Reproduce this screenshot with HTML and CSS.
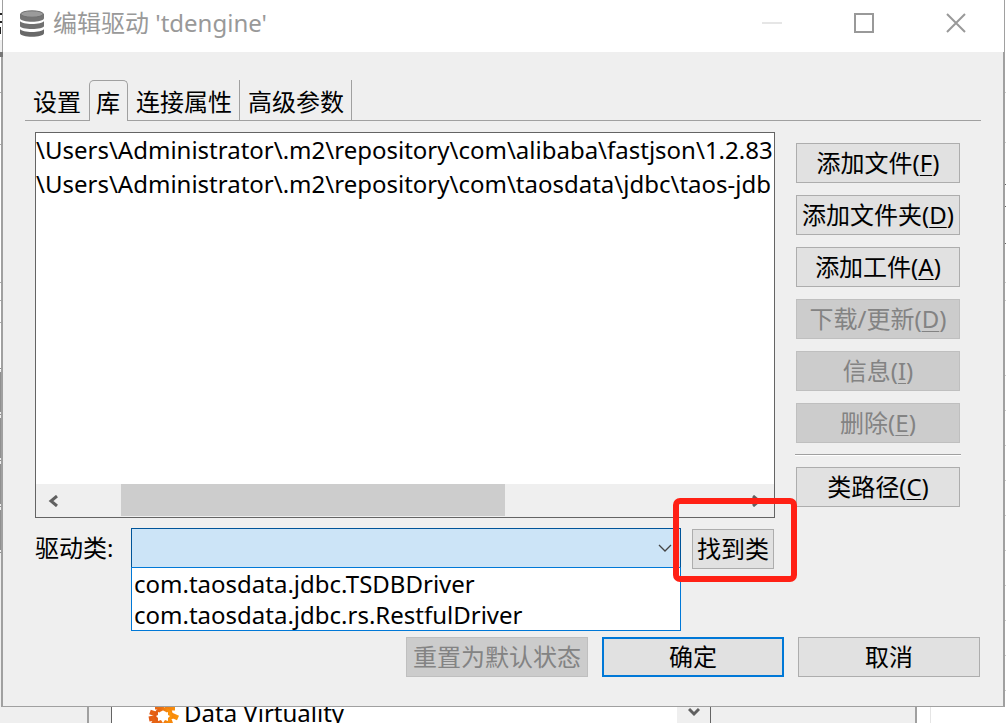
FILE: index.html
```html
<!DOCTYPE html>
<html lang="zh-CN">
<head>
<meta charset="utf-8">
<title>编辑驱动 'tdengine'</title>
<link rel="stylesheet" href="styles.css">
</head>
<body>
<div class="screen">
  <svg class="edge edge-left" width="3" height="707" viewBox="0 0 3 707" aria-hidden="true">
    <path fill="#efefef" d="M0 40h2v667H0z"/>
    <path fill="#fff" d="M0 57h1v313H0z"/>
    <path fill="#222" d="M0 13h2v2H0zM0 21h2v2H0zM0 27h1v7H0z"/>
    <path fill="#777" d="M0 52h3v5H0z"/>
    <path fill="#aaa" d="M0 92h3v1H0zM0 144h3v1H0zM0 282h3v1H0zM0 300h3v1H0zM0 322h3v1H0z"/>
    <path fill="#909090" d="M0 368h2v1H0zM0 372h2v40H0zM0 414h2v1H0zM0 418h2v40H0zM0 460h2v1H0zM0 464h2v40H0zM0 506h2v1H0zM0 510h2v40H0zM0 552h2v1H0z"/>
    <path fill="#a0a0a0" d="M2 0h1v52H2zM1 57h2v650H1z"/>
  </svg>

  <main class="dialog">
    <header class="titlebar">
      <svg class="db-icon" width="24" height="27" viewBox="0 0 24 27" aria-hidden="true">
        <path fill="#757575" d="M0 4v4c0 5 24 5 24 0V4z"/>
        <ellipse cx="12" cy="4" rx="11.300" ry="3.200" fill="#9b9b9b" stroke="#707070"/>
        <path fill="#707070" d="M0 11c2 4 22 4 24 0v5c0 4-24 4-24 0z"/>
        <path fill="#696969" d="M0 19c2 4 22 4 24 0v4c0 5-24 5-24 0z"/>
      </svg>
      <h1 class="title">编辑驱动 'tdengine'</h1>
      <div class="window-controls">
        <button class="win-btn" aria-label="最小化" disabled><svg width="20" height="20" viewBox="0 0 20 20"><path stroke="#e6e6e6" stroke-width="2" d="M0 10h20"/></svg></button>
        <button class="win-btn" aria-label="最大化"><svg width="20" height="20" viewBox="0 0 20 20"><path fill="none" stroke="#999" stroke-width="2" d="M1 1h18v18H1z"/></svg></button>
        <button class="win-btn" aria-label="关闭"><svg width="20" height="20" viewBox="0 0 20 20"><path fill="none" stroke="#999" stroke-width="2" d="M1 1l18 18M19 1L1 19"/></svg></button>
      </div>
    </header>

    <div class="content">
      <div class="tabs" role="tablist">
        <button class="tab tab-first" role="tab">设置</button>
        <button class="tab tab-active" role="tab" aria-selected="true">库</button>
        <button class="tab" role="tab">连接属性</button>
        <button class="tab" role="tab">高级参数</button>
        <span class="tab-rest"></span>
      </div>

      <div class="panel">
        <div class="library">
          <div class="file-box">
            <ul class="files">
              <li>\Users\Administrator\.m2\repository\com\alibaba\fastjson\1.2.83</li>
              <li>\Users\Administrator\.m2\repository\com\taosdata\jdbc\taos-jdb</li>
            </ul>
            <div class="scrollbar">
              <button class="scroll-btn" aria-label="向左"><svg width="10" height="12" viewBox="0 0 10 12"><path fill="none" stroke="#606060" stroke-width="3" d="M9 1L3 6l6 5"/></svg></button>
              <div class="track"><div class="thumb"></div></div>
              <button class="scroll-btn" aria-label="向右"><svg width="10" height="12" viewBox="0 0 10 12"><path fill="none" stroke="#606060" stroke-width="3" d="M1 1l6 5-6 5"/></svg></button>
            </div>
          </div>
          <div class="driver-row">
            <label class="driver-label" for="driver">驱动类:</label>
            <div class="combo">
              <select id="driver" class="combo-field">
                <option selected></option>
              </select>
              <svg class="combo-arrow" width="14" height="8" viewBox="0 0 14 8" aria-hidden="true"><path fill="none" stroke="#444" stroke-width="1.300" d="M1 1l6 6 6-6"/></svg>
              <ul class="combo-list">
                <li>com.taosdata.jdbc.TSDBDriver</li>
                <li>com.taosdata.jdbc.rs.RestfulDriver</li>
              </ul>
            </div>
            <div class="find">
              <button class="btn btn-find">找到类</button>
              <span class="highlight"></span>
            </div>
          </div>
        </div>

        <div class="actions">
          <button class="btn">添加文件(<u>F</u>)</button>
          <button class="btn">添加文件夹(<u>D</u>)</button>
          <button class="btn">添加工件(<u>A</u>)</button>
          <button class="btn" disabled>下载/更新(<u>D</u>)</button>
          <button class="btn" disabled>信息(<u>I</u>)</button>
          <button class="btn" disabled>删除(<u>E</u>)</button>
          <hr class="rule">
          <button class="btn">类路径(<u>C</u>)</button>
        </div>
      </div>

      <footer class="footer">
        <button class="btn btn-wide" disabled>重置为默认状态</button>
        <button class="btn btn-wide btn-default">确定</button>
        <button class="btn btn-wide">取消</button>
      </footer>
    </div>
  </main>

  <svg class="edge edge-right" width="3" height="707" viewBox="0 0 3 707" aria-hidden="true">
    <path fill="#a0a0a0" d="M1 0h1v52H1zM0 52h2v655H0z"/>
    <path fill="#ccc" d="M2 92h1v1H2zM2 142h1v1H2zM2 282h1v1H2zM2 300h1v1H2zM2 375h1v1H2zM2 410h1v1H2zM2 445h1v1H2zM2 480h1v1H2zM2 515h1v1H2zM2 550h1v1H2zM2 585h1v1H2zM2 620h1v1H2zM2 655h1v1H2zM2 690h1v1H2z"/>
    <path fill="#666" d="M2 184h1v1H2zM2 206h1v1H2zM2 243h1v1H2z"/>
  </svg>

  <div class="behind">
    <div class="behind-gutter"></div>
    <div class="behind-margin"></div>
    <div class="behind-list">
      <svg class="dv-icon" width="32" height="18" viewBox="0 0 32 18" aria-hidden="true">
        <defs><linearGradient id="dv"><stop offset="0" stop-color="#e25a16"/><stop offset="1" stop-color="#fb9409"/></linearGradient></defs>
        <path fill="none" stroke="url(#dv)" stroke-width="5" d="M7 0h9M17 1h10M2 5l9 3M21 7l9 4M1 12l10-2M21 3l3 9M5 17l6-6M11 14l9 2M21 12l2 6"/>
        <circle cx="15" cy="9" r="7" fill="none" stroke="url(#dv)" stroke-width="4"/>
        <path fill="#fff" d="M15 3l2 3 3-1v3l2 1-2 2v3l-3-1-2 3-2-3-3 1v-3l-2-2 2-1V5l3 1z"/>
      </svg>
      <span>Data Virtuality</span>
    </div>
    <div class="behind-scroll"><svg width="12" height="10" viewBox="0 0 12 10"><path fill="none" stroke="#606060" stroke-width="3" d="M1 2l5 5 5-5"/></svg></div>
    <div class="behind-pane"></div>
    <div class="behind-gap"></div>
    <div class="behind-end"></div>
  </div>
</div>
</body>
</html>
```
FILE: styles.css
```css
* { box-sizing: border-box; }

body {
  margin: 0;
  background: #fff;
  color: #000;
  font: 24px/32px "Noto Sans", "Noto Sans CJK SC", sans-serif;
}

button, select { font: inherit; color: inherit; }

ul { margin: 0; padding: 0; list-style: none; }

.screen {
  display: grid;
  grid-template: 1fr 16px / 3px 1fr 3px;
  min-height: 100vh;
}

.edge { display: block; }

.dialog {
  display: flex;
  flex-direction: column;
  min-width: 0;
  background: #efefef;
  border-bottom: 1px solid #a0a0a0;
}

/* Title bar */
.titlebar {
  display: flex;
  align-items: center;
  height: 52px;
  padding: 0 1px 6px 17px;
  background: #fff;
}

.title {
  flex: 1;
  margin: 0 0 0 9px;
  font-size: 24px;
  font-weight: 400;
  color: #999;
}

.window-controls { display: flex; }

.win-btn {
  display: flex;
  align-items: center;
  justify-content: center;
  width: 92px;
  height: 46px;
  padding: 0;
  border: 0;
  background: none;
}

/* Content */
.content {
  display: flex;
  flex: 1;
  flex-direction: column;
  padding: 28px 22px;
}

.tabs { display: flex; height: 41px; }

.tab {
  padding: 4px 7px 0 8px;
  border: 0;
  border-right: 1px solid #a0a0a0;
  border-bottom: 1px solid #a0a0a0;
  background: none;
}

.tab-first { padding-right: 8px; border-right: 0; }

.tab-active {
  padding: 3px 7px 0 6px;
  border: 1px solid #a0a0a0;
  border-bottom: 0;
  border-radius: 5px 5px 0 0;
}

.tab-rest { flex: 1; border-bottom: 1px solid #a0a0a0; }

.panel {
  display: flex;
  flex: 1;
  gap: 21px;
  padding: 11px 21px 0 10px;
}

.library {
  display: flex;
  flex: 1;
  flex-direction: column;
  gap: 10px;
  min-width: 0;
}

.file-box {
  display: flex;
  flex: 1;
  flex-direction: column;
  border: 1px solid #646464;
  background: #fff;
}

.files {
  flex: 1;
  overflow: hidden;
  line-height: 34px;
  white-space: nowrap;
}

.scrollbar { display: flex; height: 33px; background: #efefef; }

.scroll-btn {
  display: flex;
  align-items: center;
  justify-content: center;
  width: 34px;
  padding: 0;
  border: 0;
  background: none;
}

.track { display: flex; flex: 1; padding: 0 0 1px 51px; }
.thumb { width: 62%; background: #cdcdcd; }

.driver-row { display: flex; padding-right: 1px; }
.driver-label { width: 96px; line-height: 40px; }

.combo { position: relative; flex: 1; height: 40px; }

.combo-field {
  display: block;
  width: 100%;
  height: 40px;
  border: 1px solid #005499;
  border-radius: 0;
  background: #cce4f7;
  appearance: none;
}

.combo-arrow { position: absolute; top: 16px; right: 9px; }

.combo-list {
  position: absolute;
  top: 39px;
  left: 0;
  right: 0;
  border: 1px solid #0078d7;
  padding-left: 2px;
  background: #fff;
  line-height: 31px;
}

.find { position: relative; margin-left: 11px; padding-top: 1px; }

.highlight {
  position: absolute;
  inset: -30px -23px -13px -19px;
  border: 6px solid #ff2015;
  border-radius: 7px;
  pointer-events: none;
}

/* Buttons */
.btn {
  height: 40px;
  padding: 0;
  border: 1px solid #adadad;
  background: #e1e1e1;
  white-space: nowrap;
}

.btn:disabled {
  border-color: #bfbfbf;
  background: #ccc;
  color: #838383;
}

.btn u {
  text-decoration-thickness: 1px;
  text-underline-offset: 3px;
}

.btn-find { width: 82px; }
.btn-wide { width: 182px; }
.btn-default { border: 2px solid #0078d7; }

.actions {
  display: flex;
  flex-direction: column;
  gap: 12px;
  width: 164px;
  padding-top: 11px;
}

.rule {
  width: 166px;
  height: 2px;
  margin: -1px;
  border: 0;
  border-top: 1px solid #a0a0a0;
  background: #fff;
}

.footer {
  display: flex;
  justify-content: flex-end;
  gap: 14px;
  padding: 68px 1px 1px 0;
}

/* Window behind the dialog */
.behind {
  display: flex;
  grid-column: 1 / -1;
  overflow: hidden;
  background: #fff;
}

.behind-gutter { width: 89px; border-right: 2px solid #a0a0a0; background: #efefef; }
.behind-margin { width: 23px; border-right: 1px solid #646464; background: #efefef; }

.behind-list {
  display: flex;
  flex: 1;
  gap: 4px;
  padding-left: 36px;
  line-height: 12px;
  white-space: nowrap;
}

.behind-scroll {
  display: flex;
  justify-content: center;
  width: 34px;
  border-right: 1px solid #646464;
  background: #efefef;
}

.behind-pane { width: 206px; border-right: 2px solid #a0a0a0; background: #efefef; }
.behind-gap { width: 14px; border-right: 1px solid #e5e5e5; }
.behind-end { width: 75px; }
```
